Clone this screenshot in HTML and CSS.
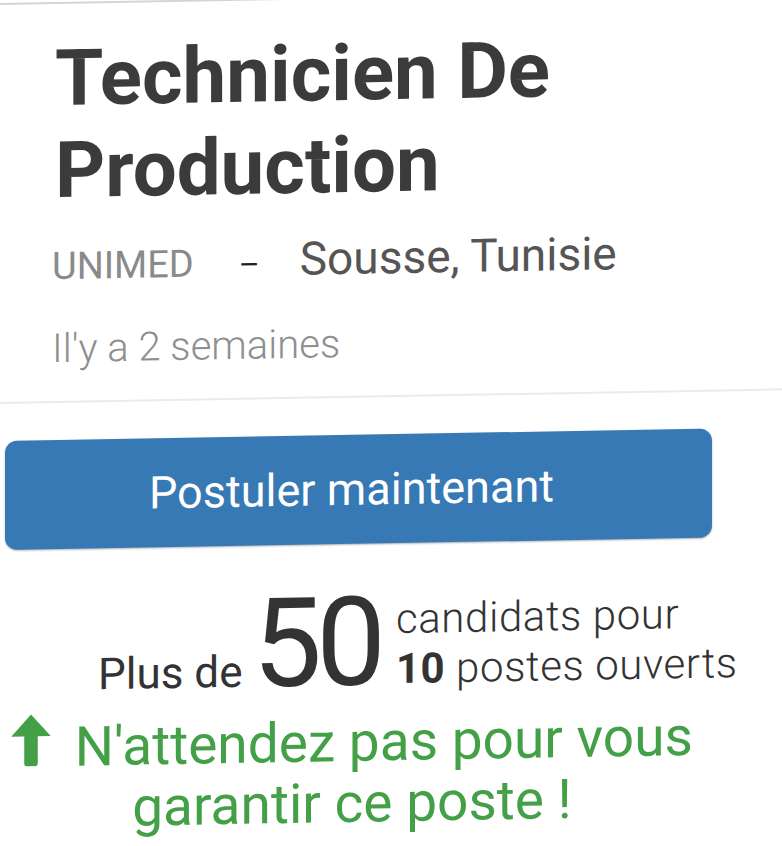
FILE: index.html
```html
<!DOCTYPE html>
<html lang="fr">
<head>
  <meta charset="UTF-8" />
  <meta name="viewport" content="width=device-width, initial-scale=1" />
  <title>Technicien De Production - UNIMED</title>
  <link rel="stylesheet" href="styles.css">
</head>
<body>

<div class="job">
  <div class="job-head">
    <h1 class="job-title">Technicien De Production</h1>
    <div class="job-meta">
      <span class="company">UNIMED</span>
      <span class="dash">–</span>
      <span class="place">Sousse, Tunisie</span>
    </div>
    <div class="posted">Il'y a 2 semaines</div>
  </div>

  <div class="apply">
    <button class="apply-btn">Postuler maintenant</button>
  </div>

  <div class="stats">
    <span class="stats-lead">Plus de</span>
    <span class="stats-num">50</span>
    <span class="stats-side">
      <span>candidats pour</span>
      <span><b>10</b> postes ouverts</span>
    </span>
  </div>

  <p class="hurry">
    <svg class="hurry-icon" viewBox="0 0 38 50" width="40" height="52">
      <path d="M19 0 L38 21 L25.5 21 L25.5 47 Q25.5 50 22.5 50 L15.5 50 Q12.5 50 12.5 47 L12.5 21 L0 21 Z" fill="#43a047"/>
    </svg>
    N'attendez pas pour vous garantir ce poste !
  </p>
</div>

</body>
</html>
```

FILE: styles.css
```css
body {
  margin: 0;
  background: #fff;
  font-family: Roboto, "Noto Sans", sans-serif;
  color: #3c3c3c;
}
.job {
  width: 782px;
  margin-top: 3px;
  border-top: 2px solid #d4d4d4;
  padding-top: 29px;
  transform: skewY(-1deg);
  transform-origin: 0 0;
}
.job-head {
  padding: 0 20px 32px 52px;
  border-bottom: 2px solid #ebebeb;
}
.job-title {
  margin: 0 0 0 3px;
  max-width: 600px;
  font-size: 78px;
  line-height: 92px;
  font-weight: 700;
  color: #3b3b3b;
}
.job-meta {
  margin-top: 23px;
  display: flex;
  align-items: baseline;
}
.job-meta span {
  line-height: 1;
}
.company {
  font-size: 38px;
  color: #8a8a8a;
}
.dash {
  margin: 0 40px 0 45px;
  font-size: 32px;
  color: #222;
}
.place {
  font-size: 46px;
  color: #555;
}
.posted {
  margin-top: 43px;
  font-size: 40px;
  line-height: 40px;
  font-weight: 300;
  color: #8f8f8f;
}
.apply {
  padding: 37px 0 0 5px;
}
.apply-btn {
  width: 707px;
  height: 109px;
  padding: 0 14px 0 0;
  border: none;
  border-radius: 12px;
  background: #3679b5;
  color: #fff;
  font-family: Roboto, sans-serif;
  font-size: 45px;
  box-shadow: 0 1px 2px rgba(0, 0, 0, 0.3);
}
.stats {
  margin-top: 49px;
  padding-left: 98px;
  display: flex;
  align-items: flex-end;
  gap: 16px;
  color: #333;
}
.stats-lead {
  font-size: 44px;
  line-height: 50px;
}
.stats-num {
  margin-left: -6px;
  font-size: 124px;
  line-height: 100px;
  letter-spacing: -6px;
  padding-bottom: 2px;
}
.stats-side {
  display: flex;
  flex-direction: column;
  font-size: 42px;
  font-weight: 300;
  letter-spacing: 0.6px;
  line-height: 50px;
}
.stats-side b {
  font-weight: 700;
}
.hurry {
  margin: 14px 0 0;
  width: 696px;
  padding-left: 4px;
  text-align: center;
  font-size: 55px;
  line-height: 61px;
  color: #43a047;
}
.hurry-icon {
  margin-right: 10px;
}
```
